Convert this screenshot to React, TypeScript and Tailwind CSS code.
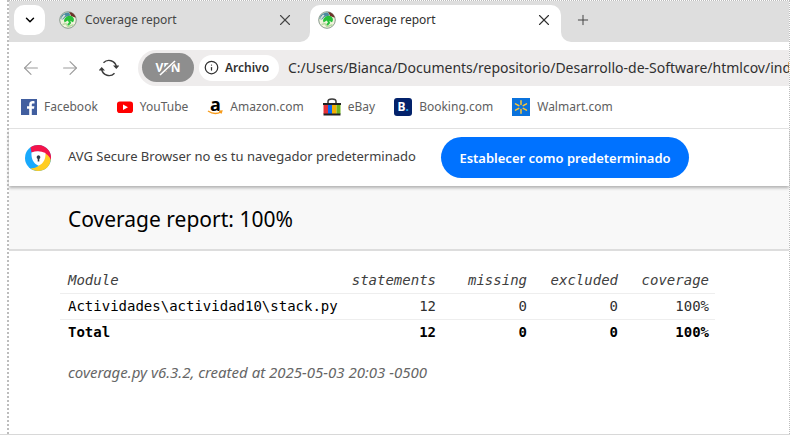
import React from 'react';
import { ArrowLeft, ArrowRight, ChevronDown, Info, Plus, X } from 'lucide-react';

function CoverageIcon() {
  return (
    <svg viewBox="0 0 18 18" className="size-[18px] shrink-0" aria-hidden="true">
      <circle cx="9" cy="9" r="8.3" fill="#f0f3dc" stroke="#8a9b8e" strokeWidth="1" />
      <path d="M1.500 8C2 3.500 5.500 1.300 10 1.400L11.500 4.500 6.500 6 4 8.500Z" fill="#4c8ba0" />
      <path d="M1.800 7.500 5 3.500 6.500 4.500 3.500 8Z" fill="#dbe6da" />
      <path d="M10 1C13.500 1.200 16 3.500 16.800 6.800L12.200 5Z" fill="#6e3029" />
      <path d="M5 9.300C6 5.500 10 4 12.800 5.200 15.500 6.800 15.500 10 13.800 11.200L11.200 9.800 12.200 12 9.500 15 8 13.500 10 11.500 8.700 9.500 5.500 11.500Z" fill="#27c13b" />
      <path d="M3.500 13.500 7 12.500 9 15.500 14.500 13.800" fill="none" stroke="#b7dba2" strokeWidth="1.500" />
    </svg>
  );
}

function ReloadIcon() {
  return (
    <svg viewBox="0 0 20 20" className="size-5" fill="none" stroke="#3c3c3c" strokeWidth="1.400" aria-hidden="true">
      <path d="M4.500 4.800A7.500 7.500 0 0 1 17.300 8.500M15.500 15.200A7.500 7.500 0 0 1 2.700 11.500" />
      <path d="M14 7.500H20.500L17.300 11ZM6 12.500H-.5L2.700 9Z" fill="#3c3c3c" stroke="none" />
    </svg>
  );
}

function FacebookIcon() {
  return (
    <svg viewBox="0 0 16 16" className="size-4" aria-hidden="true">
      <rect width="16" height="16" fill="#415e9f" />
      <path d="M10.800 16V9.800H13L13.400 7.300H10.800V5.900C10.800 5 11.200 4.600 12.100 4.600H13.500V2.300C11 1.700 8.200 2.200 8.200 5.500V7.300H6V9.800H8.200V16Z" fill="#fff" />
    </svg>
  );
}

function YouTubeIcon() {
  return (
    <svg viewBox="0 0 16 16" className="size-4" aria-hidden="true">
      <rect y="2.500" width="16" height="11.500" rx="2.800" fill="#f00" />
      <path d="M6 5.500V11L11 8.250Z" fill="#fff" />
    </svg>
  );
}

function AmazonIcon() {
  return (
    <span className="relative flex size-4 justify-center">
      <span className="text-[18px] leading-[10px] font-bold text-black">a</span>
      <svg viewBox="0 0 16 5" className="absolute bottom-0 left-0 h-[5px] w-4" aria-hidden="true">
        <path d="M1 1Q7.500 5.500 14 2M12 1.200 14.800 1 14 3.500" fill="none" stroke="#f79c1c" strokeWidth="1.400" />
      </svg>
    </span>
  );
}

function EbayIcon() {
  return (
    <svg viewBox="0 0 18 18" className="size-[18px]" aria-hidden="true">
      <path d="M5 6V3.500Q5 1 9 1T13 3.500V6" fill="none" stroke="#3c3c3c" strokeWidth="1.500" />
      <path d="M0 5H18V7H0Z" fill="#222" />
      <path d="M.5 7H5V16H.5Z" fill="#e53238" />
      <path d="M5 7H9V16H5Z" fill="#0968f6" />
      <path d="M9 7H13.500V16H9Z" fill="#f5af02" />
      <path d="M13.500 7H17.500V16H13.500Z" fill="#70b51d" />
      <path d="M.5 15.500H17.500V17.500H.5Z" fill="#222" />
    </svg>
  );
}

function BookingIcon() {
  return (
    <span className="flex h-[18px] w-[18px] items-center justify-center rounded-[3px] bg-[#03226b] text-[12px] leading-4 font-bold text-white">
      B<span className="text-[#28a9ed]">.</span>
    </span>
  );
}

function WalmartIcon() {
  return (
    <svg viewBox="0 0 18 18" className="size-[18px]" aria-hidden="true">
      <rect width="18" height="18" fill="#0a72dc" />
      <path d="M9 2.800V6.500M9 11.500V15.200M3.500 5.900 6.800 7.700M11.200 10.300 14.500 12.100M3.500 12.100 6.800 10.300M11.200 7.700 14.500 5.900" stroke="#ffc534" strokeWidth="1.500" strokeLinecap="round" />
    </svg>
  );
}

function AvgIcon() {
  return (
    <svg viewBox="0 0 26 26" className="size-[26px] shrink-0" aria-hidden="true">
      <circle cx="13" cy="13" r="13" fill="#18a9fc" />
      <path d="M5.500 2.300C12-1.800 20 0 23.800 5.500 26 9 26.500 12 25.600 15L20 8.500 13 6.500 6.500 7.500Z" fill="#f4134a" />
      <path d="M25.600 14.500C25.600 20.500 20.500 26 13 26 10 26 7.500 25 5.500 23.200 10 23.500 13.500 21.500 15 19.500L20.500 8.500C23 10 25 12 25.600 14.500Z" fill="#ffcd22" />
      <path d="M6.500 7.500Q13.500 4.800 20.500 8C20.800 14 18.500 18.500 13.500 20.800 8.500 18.500 6 14 6.500 7.500Z" fill="#fff" />
      <path d="M13.500 10.300A1.900 1.900 0 0 1 14.300 13.900V16.500H12.700V13.900A1.900 1.900 0 0 1 13.500 10.300Z" fill="#303d4b" />
    </svg>
  );
}

const bookmarks = [
  { name: 'Facebook', icon: <FacebookIcon /> },
  { name: 'YouTube', icon: <YouTubeIcon /> },
  { name: 'Amazon.com', icon: <AmazonIcon /> },
  { name: 'eBay', icon: <EbayIcon /> },
  { name: 'Booking.com', icon: <BookingIcon /> },
  { name: 'Walmart.com', icon: <WalmartIcon /> },
];

const columns = ['statements', 'missing', 'excluded', 'coverage'];
const figures = ['12', '0', '0', '100%'];

function TabStrip() {
  return (
    <div className="flex h-[41px] bg-[#dedede] text-[12px] text-[#454545]">
      <button aria-label="Buscar pestañas" className="mt-1 ml-[5px] flex h-[30px] w-[31px] shrink-0 items-center justify-center rounded-[10px] bg-white text-black">
        <ChevronDown size={14} strokeWidth={2.5} />
      </button>
      <div className="flex h-[38px] w-[255px] items-center gap-2 pr-[6px] pl-[14px]">
        <CoverageIcon />
        <span className="flex-1">Coverage report</span>
        <button aria-label="Cerrar pestaña"><X size={18} strokeWidth={1.5} /></button>
      </div>
      <div className="size-[10px] shrink-0 self-end bg-white"><div className="size-full rounded-br-[10px] bg-[#dedede]" /></div>
      <div className="mt-1 flex w-[251px] items-center gap-2 rounded-t-[10px] bg-white pr-2 pb-[7px] pl-2 text-[#303030]">
        <CoverageIcon />
        <span className="flex-1">Coverage report</span>
        <button aria-label="Cerrar pestaña"><X size={18} strokeWidth={1.5} /></button>
      </div>
      <div className="size-[10px] shrink-0 self-end bg-white"><div className="size-full rounded-bl-[10px] bg-[#dedede]" /></div>
      <button aria-label="Nueva pestaña" className="flex h-[38px] w-6 items-center justify-center"><Plus size={16} strokeWidth={1.5} /></button>
    </div>
  );
}

function Toolbar() {
  return (
    <div className="flex h-[51px] items-center overflow-hidden">
      <div className="flex w-[129px] shrink-0 items-center gap-[19px] pl-3">
        <button aria-label="Atrás"><ArrowLeft size={22} strokeWidth={1.2} color="#9b9b9b" className="-mx-px" /></button>
        <button aria-label="Adelante"><ArrowRight size={22} strokeWidth={1.2} color="#9b9b9b" className="-mx-px" /></button>
        <button aria-label="Recargar"><ReloadIcon /></button>
      </div>
      <div className="flex h-9 min-w-0 flex-1 items-center rounded-l-full bg-[#eeecec] pl-1">
        <button className="relative flex h-[29px] w-[52px] shrink-0 items-center justify-center rounded-full bg-[#8e8e8e] text-[12px] font-bold text-white">
          VPN
          <svg viewBox="0 0 26 16" className="absolute h-4 w-[26px]" aria-hidden="true">
            <path d="M6 13.500 19 1" stroke="#8e8e8e" strokeWidth="4" />
            <path d="M5 15 20 1" stroke="#fff" strokeWidth="1.600" />
          </svg>
        </button>
        <button className="ml-[5px] flex h-[26px] w-20 shrink-0 items-center gap-[6px] rounded-full bg-white pl-[5px] text-[12px] font-semibold text-[#303030]">
          <Info size={15} strokeWidth={2} />
          Archivo
        </button>
        <input
          aria-label="Dirección"
          readOnly
          className="ml-[9px] min-w-0 flex-1 bg-transparent text-[14px] text-[#303030] outline-none"
          value="C:/Users/Bianca/Documents/repositorio/Desarrollo-de-Software/htmlcov/index.html"
        />
      </div>
    </div>
  );
}

export default function App() {
  return (
    <div className="flex min-h-screen flex-col border-b border-[#d8d8d8] bg-white pl-[7px] font-['Noto_Sans','Open_Sans',sans-serif]">
      <div className="flex flex-1 flex-col border-t border-r border-l-2 border-dotted border-[#bdbdbd]">
        <TabStrip />
        <Toolbar />
        <nav className="flex h-9 items-center gap-[19px] border-b border-solid border-[#e4e4e4] pb-[8px] pl-3 text-[12px] text-[#606060]">
          {bookmarks.map(({ name, icon }) => (
            <a key={name} href="#" className="flex items-center gap-[7px]">
              {icon}
              {name}
            </a>
          ))}
        </nav>
        <div className="z-10 flex h-[57px] items-center pl-4 shadow-[0_2px_3px_#b0b0b0]">
          <AvgIcon />
          <p className="ml-[17px] w-[355px] pb-px text-[13px] text-[#404040]">AVG Secure Browser no es tu navegador predeterminado</p>
          <button className="ml-[18px] h-[41px] w-[248px] rounded-full bg-[#0072ff] pt-[2px] text-[13px] font-semibold text-white">Establecer como predeterminado</button>
        </div>
        <header className="flex h-[65px] items-center border-b-2 border-[#dddddd] bg-[#f8f8f8] pl-[59px]">
          <h1 className="pt-1 text-[21px] text-black">Coverage report: 100%</h1>
        </header>
        <main className="pt-4 pl-[51px]">
          <table className="w-[655px] max-w-full table-fixed border-collapse text-right font-['DejaVu_Sans_Mono',monospace] text-[14px] text-black">
            <thead>
              <tr className="h-[26px] border-b border-[#eeeeee] text-[#404040] italic">
                <th className="pt-px pl-2 text-left font-normal">Module</th>
                {columns.map((column) => (
                  <th key={column} className="w-[91px] pt-px pr-[6px] font-normal">{column}</th>
                ))}
              </tr>
            </thead>
            <tbody>
              <tr className="h-[26px] border-b border-[#eeeeee]">
                <td className="pl-2 text-left"><a href="#">Actividades\actividad10\stack.py</a></td>
                {figures.map((figure, i) => (
                  <td key={columns[i]} className="pr-[6px] text-[#303030]">{figure}</td>
                ))}
              </tr>
            </tbody>
            <tfoot>
              <tr className="h-[26px] font-bold">
                <td className="pl-2 text-left">Total</td>
                {figures.map((figure, i) => (
                  <td key={columns[i]} className="pr-[6px]">{figure}</td>
                ))}
              </tr>
            </tfoot>
          </table>
          <footer className="mt-4 pl-2 text-[15px] text-[#666666] italic">coverage.py v6.3.2, created at 2025-05-03 20:03 -0500</footer>
        </main>
      </div>
    </div>
  );
}
